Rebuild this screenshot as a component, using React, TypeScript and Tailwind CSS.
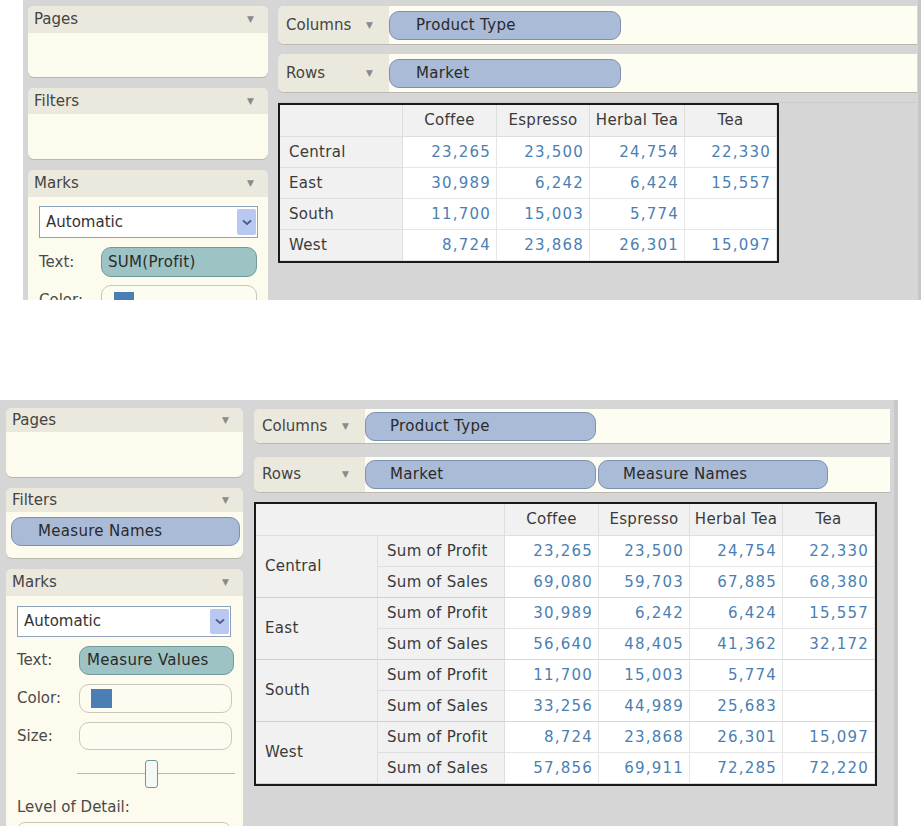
import type { ReactNode } from "react";

const font = { fontFamily: '"DejaVu Sans", Verdana, sans-serif' };

function Arrow() {
  return <span className="text-[9px] leading-none text-[#8a8a8a]">▼</span>;
}

function Card({
  title,
  headerH,
  className,
  children,
}: {
  title: string;
  headerH: string;
  className: string;
  children?: ReactNode;
}) {
  return (
    <div className={`flex shrink-0 flex-col overflow-hidden rounded-[6px] bg-[#fcfbee] shadow-[0_1px_0_#b9b9b2] ${className}`}>
      <div className={`flex shrink-0 items-center justify-between bg-[#ebe9dd] pl-[6px] pr-[14px] ${headerH}`}>
        <span className="text-[15px] text-[#444]">{title}</span>
        <Arrow />
      </div>
      {children}
    </div>
  );
}

function Pill({ children, className, tone = "blue" }: { children: ReactNode; className: string; tone?: "blue" | "teal" }) {
  const look =
    tone === "blue"
      ? "border-[#7d90b0] bg-[#aabbd8]"
      : "border-[#6f9b9c] bg-[#9dc3c4]";
  return (
    <div className={`flex shrink-0 items-center rounded-[10px] border-[1.5px] text-[15px] tracking-[0.3px] text-[#2a2a2a] ${look} ${className}`}>
      {children}
    </div>
  );
}

function Shelf({ label, h, children }: { label: string; h: string; children: ReactNode }) {
  return (
    <div className={`flex shrink-0 overflow-hidden rounded-l-[6px] bg-[#fdfdf2] shadow-[0_1px_0_#b9b9b2] ${h}`}>
      <div className="flex w-[111px] shrink-0 items-center justify-between bg-[#ebe9dd] pl-[8px] pr-[16px]">
        <span className="text-[15px] text-[#444]">{label}</span>
        <Arrow />
      </div>
      <div className="flex items-center gap-[2px]">{children}</div>
    </div>
  );
}

function Dropdown({ className }: { className: string }) {
  return (
    <div className={`flex shrink-0 items-center justify-between border border-[#8ea1bd] bg-white pl-[6px] pr-[1px] ${className}`}>
      <span className="text-[15px] text-[#333]">Automatic</span>
      <div className="flex h-[calc(100%-4px)] w-[19px] items-center justify-center rounded-[2px] bg-[#b9c8f0]">
        <svg width="10" height="7" viewBox="0 0 10 7">
          <path d="M1 1.5 L5 5 L9 1.5" fill="none" stroke="#4d5f93" strokeWidth="2" />
        </svg>
      </div>
    </div>
  );
}

function MarkRow({ label, labelW, h, children }: { label: string; labelW: string; h: string; children: ReactNode }) {
  return (
    <div className={`flex shrink-0 items-center ${h}`}>
      <span className={`shrink-0 text-[15px] text-[#4a4a4a] ${labelW}`}>{label}</span>
      {children}
    </div>
  );
}

const products = ["Coffee", "Espresso", "Herbal Tea", "Tea"];

const profit: Record<string, string[]> = {
  Central: ["23,265", "23,500", "24,754", "22,330"],
  East: ["30,989", "6,242", "6,424", "15,557"],
  South: ["11,700", "15,003", "5,774", ""],
  West: ["8,724", "23,868", "26,301", "15,097"],
};

const sales: Record<string, string[]> = {
  Central: ["69,080", "59,703", "67,885", "68,380"],
  East: ["56,640", "48,405", "41,362", "32,172"],
  South: ["33,256", "44,989", "25,683", ""],
  West: ["57,856", "69,911", "72,285", "72,220"],
};

const markets = ["Central", "East", "South", "West"];

const numCell =
  "flex items-center justify-end border-b border-r border-[#e6e6e6] bg-white pr-[5px] text-[15px] tracking-[1.2px] text-[#4a7fb3]";
const headCell =
  "flex items-center justify-center border-b border-r border-[#dedede] bg-[#f1f1f1] text-[15px] tracking-[0.3px] text-[#3a3a3a]";
const labelCell =
  "flex items-center border-b border-r border-[#dedede] bg-[#f1f1f1] pl-[9px] text-[15px] tracking-[0.3px] text-[#3a3a3a]";

function TopTable() {
  return (
    <div className="w-fit border-2 border-[#1a1a1a] bg-white">
      <div className="grid grid-cols-[123px_94px_93px_95px_92px] grid-rows-[32px_31px_31px_31px_31px]">
        <div className={headCell} />
        {products.map((p) => (
          <div key={p} className={headCell}>
            {p}
          </div>
        ))}
        {markets.map((m) => [
          <div key={m} className={labelCell}>
            {m}
          </div>,
          ...profit[m].map((v, i) => (
            <div key={m + i} className={numCell}>
              {v}
            </div>
          )),
        ])}
      </div>
    </div>
  );
}

function BottomTable() {
  return (
    <div className="w-fit border-2 border-[#1a1a1a] bg-white">
      <div className="grid grid-cols-[122px_127px_94px_91px_93px_92px] grid-rows-[32px_repeat(8,31px)]">
        <div className={`${headCell} col-span-2`} />
        {products.map((p) => (
          <div key={p} className={headCell}>
            {p}
          </div>
        ))}
        {markets.map((m) => [
          <div key={m} className={`${labelCell} row-span-2 border-b-[#cfcfcf]`}>
            {m}
          </div>,
          <div key={m + "pl"} className={labelCell}>
            Sum of Profit
          </div>,
          ...profit[m].map((v, i) => (
            <div key={m + "p" + i} className={numCell}>
              {v}
            </div>
          )),
          <div key={m + "sl"} className={`${labelCell} border-b-[#cfcfcf]`}>
            Sum of Sales
          </div>,
          ...sales[m].map((v, i) => (
            <div key={m + "s" + i} className={`${numCell} border-b-[#d6d6d6]`}>
              {v}
            </div>
          )),
        ])}
      </div>
    </div>
  );
}

function TopScreen() {
  return (
    <div className="ml-[23px] flex h-[300px] w-[898px] overflow-hidden bg-[#d6d6d6]">
      <div className="flex w-[245px] shrink-0 flex-col gap-[11px] pl-[5px] pt-[6px]">
        <Card title="Pages" headerH="h-[27px]" className="h-[71px]" />
        <Card title="Filters" headerH="h-[26px]" className="h-[71px]" />
        <Card title="Marks" headerH="h-[27px]" className="h-[200px] bg-[#ebe9dd]">
          <div className="flex flex-col px-[11px] pt-[9px]">
            <Dropdown className="h-[32px] w-[219px]" />
            <div className="mt-[9px] flex flex-col gap-[8px]">
              <MarkRow label="Text:" labelW="w-[62px]" h="h-[30px]">
                <Pill tone="teal" className="h-[30px] w-[156px] pl-[6px]">
                  SUM(Profit)
                </Pill>
              </MarkRow>
              <MarkRow label="Color:" labelW="w-[62px]" h="h-[30px]">
                <div className="flex h-[30px] w-[156px] items-center rounded-[10px] border border-[#c9c7ba] bg-[#fdfcf0] pl-[12px]">
                  <div className="h-[17px] w-[20px] bg-[#4a7eb4]" />
                </div>
              </MarkRow>
            </div>
          </div>
        </Card>
      </div>
      <div className="ml-[10px] flex flex-1 flex-col border-r-[3px] border-[#c6c6c6] pr-[1px] pt-[6px]">
        <Shelf label="Columns" h="h-[38px]">
          <Pill className="h-[29px] w-[232px] pl-[26px]">Product Type</Pill>
        </Shelf>
        <div className="mt-[10px]">
          <Shelf label="Rows" h="h-[38px]">
            <Pill className="h-[29px] w-[232px] pl-[26px]">Market</Pill>
          </Shelf>
        </div>
        <div className="mt-[10px] border-t border-[#cbcbcb]">
          <TopTable />
        </div>
      </div>
    </div>
  );
}

function BottomScreen() {
  return (
    <div className="mt-[100px] flex h-[426px] w-[898px] overflow-hidden bg-[#d6d6d6]">
      <div className="flex w-[248px] shrink-0 flex-col gap-[11px] pl-[6px] pt-[8px]">
        <Card title="Pages" headerH="h-[24px]" className="h-[69px] w-[237px]" />
        <Card title="Filters" headerH="h-[24px]" className="h-[70px] w-[237px]">
          <div className="px-[5px] pt-[5px]">
            <Pill className="h-[29px] w-[229px] pl-[26px]">Measure Names</Pill>
          </div>
        </Card>
        <Card title="Marks" headerH="h-[27px]" className="h-[270px] w-[237px] bg-[#ebe9dd]">
          <div className="flex flex-col px-[11px] pt-[10px]">
            <Dropdown className="h-[31px] w-[214px]" />
            <div className="mt-[9px] flex flex-col gap-[9px]">
              <MarkRow label="Text:" labelW="w-[62px]" h="h-[29px]">
                <Pill tone="teal" className="h-[29px] w-[155px] pl-[7px]">
                  Measure Values
                </Pill>
              </MarkRow>
              <MarkRow label="Color:" labelW="w-[62px]" h="h-[29px]">
                <div className="flex h-[29px] w-[154px] items-center rounded-[10px] border border-[#c9c7ba] bg-[#fdfcf0] pl-[11px]">
                  <div className="h-[19px] w-[21px] bg-[#4a7eb4]" />
                </div>
              </MarkRow>
              <MarkRow label="Size:" labelW="w-[62px]" h="h-[28px]">
                <div className="h-[28px] w-[154px] rounded-[10px] border border-[#c9c7ba] bg-[#fdfcf0]" />
              </MarkRow>
            </div>
            <div className="relative mt-[10px] ml-[60px] h-[28px] w-[158px] shrink-0">
              <div className="absolute left-0 right-0 top-[13px] h-px bg-[#b9b8ad]" />
              <div className="absolute left-[68px] top-0 h-[28px] w-[13px] rounded-[3px] border-[1.5px] border-[#6b9a96] bg-[#f4f9f6]" />
            </div>
            <span className="mt-[8px] text-[15px] text-[#4a4a4a]">Level of Detail:</span>
            <div className="mt-[3px] h-[20px] w-[214px] shrink-0 rounded-[8px] border border-[#c9c7ba] bg-[#fdfcf0]" />
          </div>
        </Card>
      </div>
      <div className="ml-[6px] flex w-[636px] flex-col pt-[9px]">
        <Shelf label="Columns" h="h-[34px]">
          <Pill className="h-[29px] w-[231px] pl-[24px]">Product Type</Pill>
        </Shelf>
        <div className="mt-[14px]">
          <Shelf label="Rows" h="h-[35px]">
            <Pill className="h-[29px] w-[231px] pl-[24px]">Market</Pill>
            <Pill className="h-[29px] w-[230px] pl-[24px]">Measure Names</Pill>
          </Shelf>
        </div>
        <div className="mt-[10px]">
          <BottomTable />
        </div>
      </div>
      <div className="ml-[4px] w-[4px] bg-[#c9c9c9]" />
    </div>
  );
}

export default function App() {
  return (
    <div className="h-[826px] w-[921px] overflow-hidden bg-white" style={font}>
      <TopScreen />
      <BottomScreen />
    </div>
  );
}
